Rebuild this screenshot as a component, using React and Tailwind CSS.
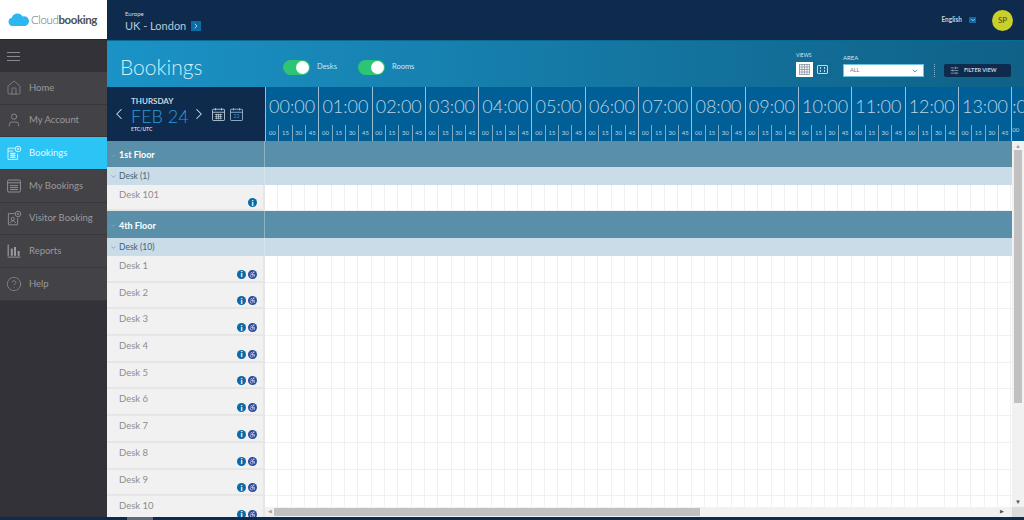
import React from 'react';
import { Home, User, CircleHelp, ChevronLeft, ChevronRight, ChevronDown, SlidersHorizontal, Accessibility } from 'lucide-react';

const hours = ['00:00', '01:00', '02:00', '03:00', '04:00', '05:00', '06:00', '07:00', '08:00', '09:00', '10:00', '11:00', '12:00', '13:00'];
const quarters = ['00', '15', '30', '45'];
const desks = ['Desk 1', 'Desk 2', 'Desk 3', 'Desk 4', 'Desk 5', 'Desk 6', 'Desk 7', 'Desk 8', 'Desk 9', 'Desk 10'];

const CalendarGrid = ({ className }) => (
    <svg viewBox="0 0 20 20" className={className} fill="none" stroke="currentColor" strokeWidth="1.1">
        <rect x="2" y="3" width="16" height="15" rx="1" />
        <path d="M2 7h16M6 1.5v3M14 1.5v3" />
        <path d="M5 10h10M5 12.5h10M5 15h10M7.5 9v7.5M10 9v7.5M12.5 9v7.5" strokeWidth="0.9" />
    </svg>
);

const DenseGrid = ({ className }) => (
    <svg viewBox="0 0 12 12" className={className} fill="none" stroke="currentColor" strokeWidth="0.8">
        <rect x="0.5" y="0.5" width="11" height="11" />
        <path d="M3.25 0.5v11M6 0.5v11M8.75 0.5v11M0.5 3.25h11M0.5 6h11M0.5 8.75h11" />
    </svg>
);

const BookingsIcon = ({ className }) => (
    <svg viewBox="0 0 20 20" className={className} fill="none" stroke="currentColor" strokeWidth="1.1">
        <path d="M11 4H2.5v14h12V11M2.5 7.5H9" />
        <path d="M5 10.5h7M5 13h7M5 15.5h7M7.5 9.5v7M10 9.5v7" />
        <circle cx="15" cy="5" r="3.5" />
        <path d="M15 3.5v3M13.5 5h3" />
    </svg>
);

const ListIcon = ({ className }) => (
    <svg viewBox="0 0 20 20" className={className} fill="none" stroke="currentColor" strokeWidth="1.1">
        <rect x="2" y="2.5" width="16" height="15" rx="1.5" />
        <path d="M2 6h16M5 9.5h10M5 12h10M5 14.5h10" />
    </svg>
);

const VisitorIcon = ({ className }) => (
    <svg viewBox="0 0 20 20" className={className} fill="none" stroke="currentColor" strokeWidth="1">
        <path d="M11 4.5H3v14h11.5V10" />
        <circle cx="8.5" cy="11" r="2" />
        <path d="M5 16.5c.5-2 2-3 3.5-3s3 1 3.5 3" />
        <circle cx="15" cy="5" r="3.5" />
        <path d="M15 3.5v3M13.5 5h3" />
    </svg>
);

const ReportsIcon = ({ className }) => (
    <svg viewBox="0 0 20 20" className={className} fill="currentColor">
        <rect x="2" y="2" width="1.5" height="14" />
        <rect x="6" y="7" width="2.5" height="9" />
        <rect x="10" y="5" width="2.5" height="11" />
        <rect x="14.5" y="10" width="2.5" height="6" />
        <rect x="2" y="17" width="16" height="1.2" />
    </svg>
);

const navItems = [
    { label: 'Home', icon: <Home className="size-[16px]" strokeWidth={1} /> },
    { label: 'My Account', icon: <User className="size-[16px]" strokeWidth={1.1} /> },
    { label: 'Bookings', icon: <BookingsIcon className="size-[16px]" />, active: true },
    { label: 'My Bookings', icon: <ListIcon className="size-[16px]" /> },
    { label: 'Visitor Booking', icon: <VisitorIcon className="size-[16px]" /> },
    { label: 'Reports', icon: <ReportsIcon className="size-[16px]" /> },
    { label: 'Help', icon: <CircleHelp className="size-[16px]" strokeWidth={1} /> },
];

const Sidebar = () => (
    <div className="w-[107px] shrink-0 bg-[#333238] flex flex-col">
        <div className="h-[32px] flex items-center pl-[7px]">
            <div className="w-[13px] flex flex-col gap-[3px]">
                <div className="h-px bg-[#8a8a8e]" />
                <div className="h-px bg-[#8a8a8e]" />
                <div className="h-px bg-[#8a8a8e]" />
            </div>
        </div>
        {navItems.map((item) => (
            <div
                key={item.label}
                className={`h-[32.67px] flex items-center pl-[6px] gap-[7px] text-[9.5px] border-b border-[#38373c] ${item.active ? 'bg-[#2cc3f5] text-[#e6f8fe]' : 'bg-[#434246] text-[#9a9a9c]'}`}
            >
                {item.icon}
                <span>{item.label}</span>
            </div>
        ))}
    </div>
);

const InfoDot = () => (
    <span className="size-[9px] rounded-full bg-[#0b6aa5] text-white flex items-center justify-center text-[8px] font-black leading-none">i</span>
);

const WheelDot = () => (
    <span className="size-[9px] rounded-full bg-[#2c4a9e] text-white flex items-center justify-center">
        <Accessibility className="size-[7px]" strokeWidth={2} />
    </span>
);

const FloorRow = ({ name, height }) => (
    <div className={`flex bg-[#598fa9] shrink-0 ${height}`}>
        <div className="w-[158px] shrink-0 flex items-center pl-[3px] pt-[2px] gap-[2px] border-r border-[#8fb3c5] text-white font-bold text-[9px]">
            <ChevronDown className="size-[7px] text-[#8fb3c5]" />
            <span>{name}</span>
        </div>
    </div>
);

const GroupRow = ({ name }) => (
    <div className="flex bg-[#c9dce7] h-[18px] shrink-0">
        <div className="w-[158px] shrink-0 flex items-center pl-[3px] gap-[2px] border-r border-[#d8e5ec] text-[#3f6477] text-[8.5px]">
            <ChevronDown className="size-[7px] text-[#6b8a9a]" />
            <span>{name}</span>
        </div>
    </div>
);

const DeskRow = ({ name, height, wheelchair }) => (
    <div className={`flex ${height} shrink-0`}>
        <div className="w-[158px] shrink-0 bg-[#f1f1f1] border-r-2 border-b-2 border-[#e6e6e6] pl-[12px] pr-[7px] pt-[3px] relative text-[#8d8d8d] text-[9.5px]">
            <span>{name}</span>
            <div className="absolute right-[6px] bottom-[2px] flex gap-[2px]">
                <InfoDot />
                {wheelchair && <WheelDot />}
            </div>
        </div>
        <div className="flex-1 border-b border-[#f0f0f0] bg-[repeating-linear-gradient(90deg,#ffffff_0,#ffffff_12.33px,#f0f0f0_12.33px,#f0f0f0_13.33px)]" />
    </div>
);

const HourCell = ({ label }) => (
    <div className="w-[53.3px] shrink-0 bg-[#005f96] border-l border-[#9dbdd2] flex flex-col text-[#bcd5e4]">
        <div className="h-[38px] flex items-center justify-center text-[18px] font-light whitespace-nowrap">{label}</div>
        <div className="flex-1 flex">
            {quarters.map((q, i) => (
                <div key={q} className={`flex-1 flex items-center justify-center pb-[2px] text-[6px] ${i > 0 ? 'border-l border-[#7fa9c4]' : ''}`}>{q}</div>
            ))}
        </div>
    </div>
);

const TimeHeader = () => (
    <div className="h-[54px] shrink-0 flex bg-[#0e2b4d]">
        <div className="w-[158px] shrink-0 flex items-center pl-[3px] text-[#cfe1ec]">
            <ChevronLeft className="size-[18px]" strokeWidth={1.4} />
            <div className="ml-[3px] w-[59px]">
                <div className="text-[8px] font-bold leading-[9px] text-[#c9d6df]">THURSDAY</div>
                <div className="text-[18px] font-light leading-[21px] text-[#2a9bd6] whitespace-nowrap">FEB 24</div>
                <div className="text-[5px] font-bold leading-[5px] text-[#c9d6df]">ETC/UTC</div>
            </div>
            <ChevronRight className="size-[18px]" strokeWidth={1.4} />
            <CalendarGrid className="size-[15px] ml-[3px] text-[#c9d6df]" />
            <div className="relative ml-[3px]">
                <svg viewBox="0 0 20 20" className="size-[15px] text-[#9fc3da]" fill="none" stroke="currentColor" strokeWidth="1.1">
                    <rect x="2" y="3" width="16" height="15" rx="1" />
                    <path d="M2 7h16M6 1.5v3M14 1.5v3" />
                </svg>
                <span className="absolute inset-x-0 top-[6px] text-center text-[5px] leading-[6px] text-[#2a97d2]">23</span>
            </div>
        </div>
        <div className="flex-1 flex overflow-hidden">
            {hours.map((h) => (
                <HourCell key={h} label={h} />
            ))}
            <div className="flex-1 bg-[#005f96] border-l border-[#9dbdd2] overflow-hidden text-[#bcd5e4]">
                <div className="h-[38px] pt-[8px] text-[18px] font-light leading-[22px]">:0</div>
                <div className="text-[6px]">00</div>
            </div>
        </div>
    </div>
);

const Toggle = ({ label, className }) => (
    <div className={`flex items-center gap-[7px] text-[7.5px] text-[#cde7f3] mt-[6px] ${className}`}>
        <span className="w-[27px] h-[15px] rounded-full bg-[#2dc574] flex justify-end items-center pr-[1px]">
            <span className="size-[13px] rounded-full bg-white" />
        </span>
        <span>{label}</span>
    </div>
);

const App = () => {
    return (
        <div className="w-[1024px] h-[520px] overflow-hidden flex flex-col bg-[#0e2b4d] font-['Lato','Liberation_Sans',sans-serif]">
            {/* top bar */}
            <div className="h-[40px] shrink-0 flex bg-[#0e2b4d]">
                <div className="w-[107px] h-[39px] shrink-0 bg-white flex items-center pl-[8px]">
                    <svg viewBox="0 0 24 14" className="w-[22px] h-[13px] text-[#2cb8ee]" fill="currentColor">
                        <path d="M5 14a4.5 4.5 0 0 1-.8-8.9A6.5 6.5 0 0 1 16 3.6 5.3 5.3 0 0 1 19 14z" />
                    </svg>
                    <span className="text-[11.5px] tracking-[-0.4px] text-[#6d6f72] font-light leading-none ml-[1px]">Cloud</span>
                    <span className="text-[11.5px] tracking-[-0.4px] text-[#4d4f52] font-bold leading-none">booking</span>
                </div>
                <div className="pl-[18px] pt-[9px] flex-1">
                    <div className="text-[6px] leading-[9px] text-[#d5dee6]">Europe</div>
                    <div className="flex items-center gap-[5px] text-[11px] leading-[15px] text-[#b9c9d6]">
                        <span>UK - London</span>
                        <span className="size-[10px] bg-[#0d6ba3] flex items-center justify-center">
                            <ChevronRight className="size-[8px] text-[#cfe6f3]" strokeWidth={2.5} />
                        </span>
                    </div>
                </div>
                <div className="flex items-center pr-[11px]">
                    <span className="text-[6.5px] font-bold text-[#c4d0da]">English</span>
                    <span className="ml-[7px] w-[7px] h-[6px] bg-[#0d6ba3] flex items-center justify-center">
                        <ChevronDown className="size-[6px] text-[#cfe6f3]" strokeWidth={3} />
                    </span>
                    <span className="ml-[16px] size-[21px] rounded-full bg-[#c9cf2b] flex items-center justify-center text-[8px] text-[#44481a]">SP</span>
                </div>
            </div>

            <div className="h-[477px] flex">
                <Sidebar />
                <div className="flex-1 flex flex-col min-w-0 bg-white">
                    {/* page header */}
                    <div className="h-[47px] shrink-0 flex items-center bg-gradient-to-r from-[#1b93c6] to-[#0f6187] border-t border-[#0b6a92]">
                        <div className="w-[176px] shrink-0 pl-[13px] mt-[5px] text-[21px] font-light text-[#d4edf7] leading-none">Bookings</div>
                        <Toggle label="Desks" />
                        <Toggle label="Rooms" className="ml-[21px]" />
                        <div className="ml-auto flex items-end pr-[13px] pt-[1px]">
                            <div>
                                <div className="text-[5px] leading-[7px] text-[#cde7f3] mb-[3px]">VIEWS</div>
                                <div className="flex">
                                    <span className="w-[17px] h-[15px] bg-white flex items-center justify-center">
                                        <DenseGrid className="size-[11px] text-[#7d8b94]" />
                                    </span>
                                    <span className="w-[19px] h-[15px] bg-[#14688f] flex items-center justify-center">
                                        <span className="w-[11px] h-[9px] border border-[#bcd8e6] rounded-[1px] grid grid-cols-2 gap-px p-px place-items-center">
                                            <span className="size-[1.5px] bg-[#bcd8e6]" />
                                            <span className="size-[1.5px] bg-[#bcd8e6]" />
                                            <span className="size-[1.5px] bg-[#bcd8e6]" />
                                            <span className="size-[1.5px] bg-[#bcd8e6]" />
                                        </span>
                                    </span>
                                </div>
                            </div>
                            <div className="ml-[11px]">
                                <div className="text-[6px] leading-[7px] text-[#cde7f3] mb-[3px]">AREA</div>
                                <div className="w-[81px] h-[13px] bg-white border border-[#6cc3de] flex items-center justify-between pl-[6px] pr-[4px] text-[5.5px] text-[#6b7780]">
                                    <span>ALL</span>
                                    <ChevronDown className="size-[8px] text-[#2a97d2]" strokeWidth={2.5} />
                                </div>
                            </div>
                            <div className="ml-[10px] h-[13px] border-l border-dotted border-[#7fb3cb]" />
                            <div className="ml-[9px] w-[67px] h-[13px] bg-[#0e2b4d] rounded-[2px] flex items-center pl-[6px] gap-[5px] text-[5.5px] font-bold text-[#c4d4df]">
                                <SlidersHorizontal className="size-[9px]" strokeWidth={1.5} />
                                <span>FILTER VIEW</span>
                            </div>
                        </div>
                    </div>

                    <TimeHeader />

                    {/* bookings grid */}
                    <div className="flex-1 flex min-h-0 relative">
                        <div className="flex-1 flex flex-col min-w-0 overflow-hidden">
                            <FloorRow name="1st Floor" height="h-[26px]" />
                            <GroupRow name="Desk (1)" />
                            <DeskRow name="Desk 101" height="h-[26px]" />
                            <FloorRow name="4th Floor" height="h-[27px]" />
                            <GroupRow name="Desk (10)" />
                            {desks.map((d) => (
                                <DeskRow key={d} name={d} height="h-[26.7px]" wheelchair />
                            ))}
                        </div>

                        {/* vertical scrollbar */}
                        <div className="w-[12px] shrink-0 bg-[#f1f1f1] flex flex-col items-center">
                            <div className="h-[9px] text-[6px] leading-[9px] text-[#a3a3a3]">▲</div>
                            <div className="w-[8px] h-[253px] bg-[#c1c1c1]" />
                            <div className="flex-1" />
                            <div className="h-[20px] text-[6px] leading-[9px] text-[#505050]">▼</div>
                        </div>

                        {/* horizontal scrollbar */}
                        <div className="absolute left-[158px] right-0 bottom-0 h-[10px] bg-[#f1f1f1] flex items-center">
                            <span className="w-[9px] text-center text-[5px] text-[#a3a3a3]">◀</span>
                            <div className="w-[426px] h-[8px] bg-[#c1c1c1]" />
                            <div className="flex-1" />
                            <span className="w-[12px] text-[5px] text-[#505050]">▶</span>
                            <div className="w-[12px] h-full bg-[#dcdcdc]" />
                        </div>
                    </div>
                </div>
            </div>

            {/* window edge */}
            <div className="h-[3px] shrink-0 bg-[#0e2b4d] flex">
                <div className="w-[127px]" />
                <div className="w-[26px] bg-[#5d6b78]" />
            </div>
        </div>
    );
};

export default App;
